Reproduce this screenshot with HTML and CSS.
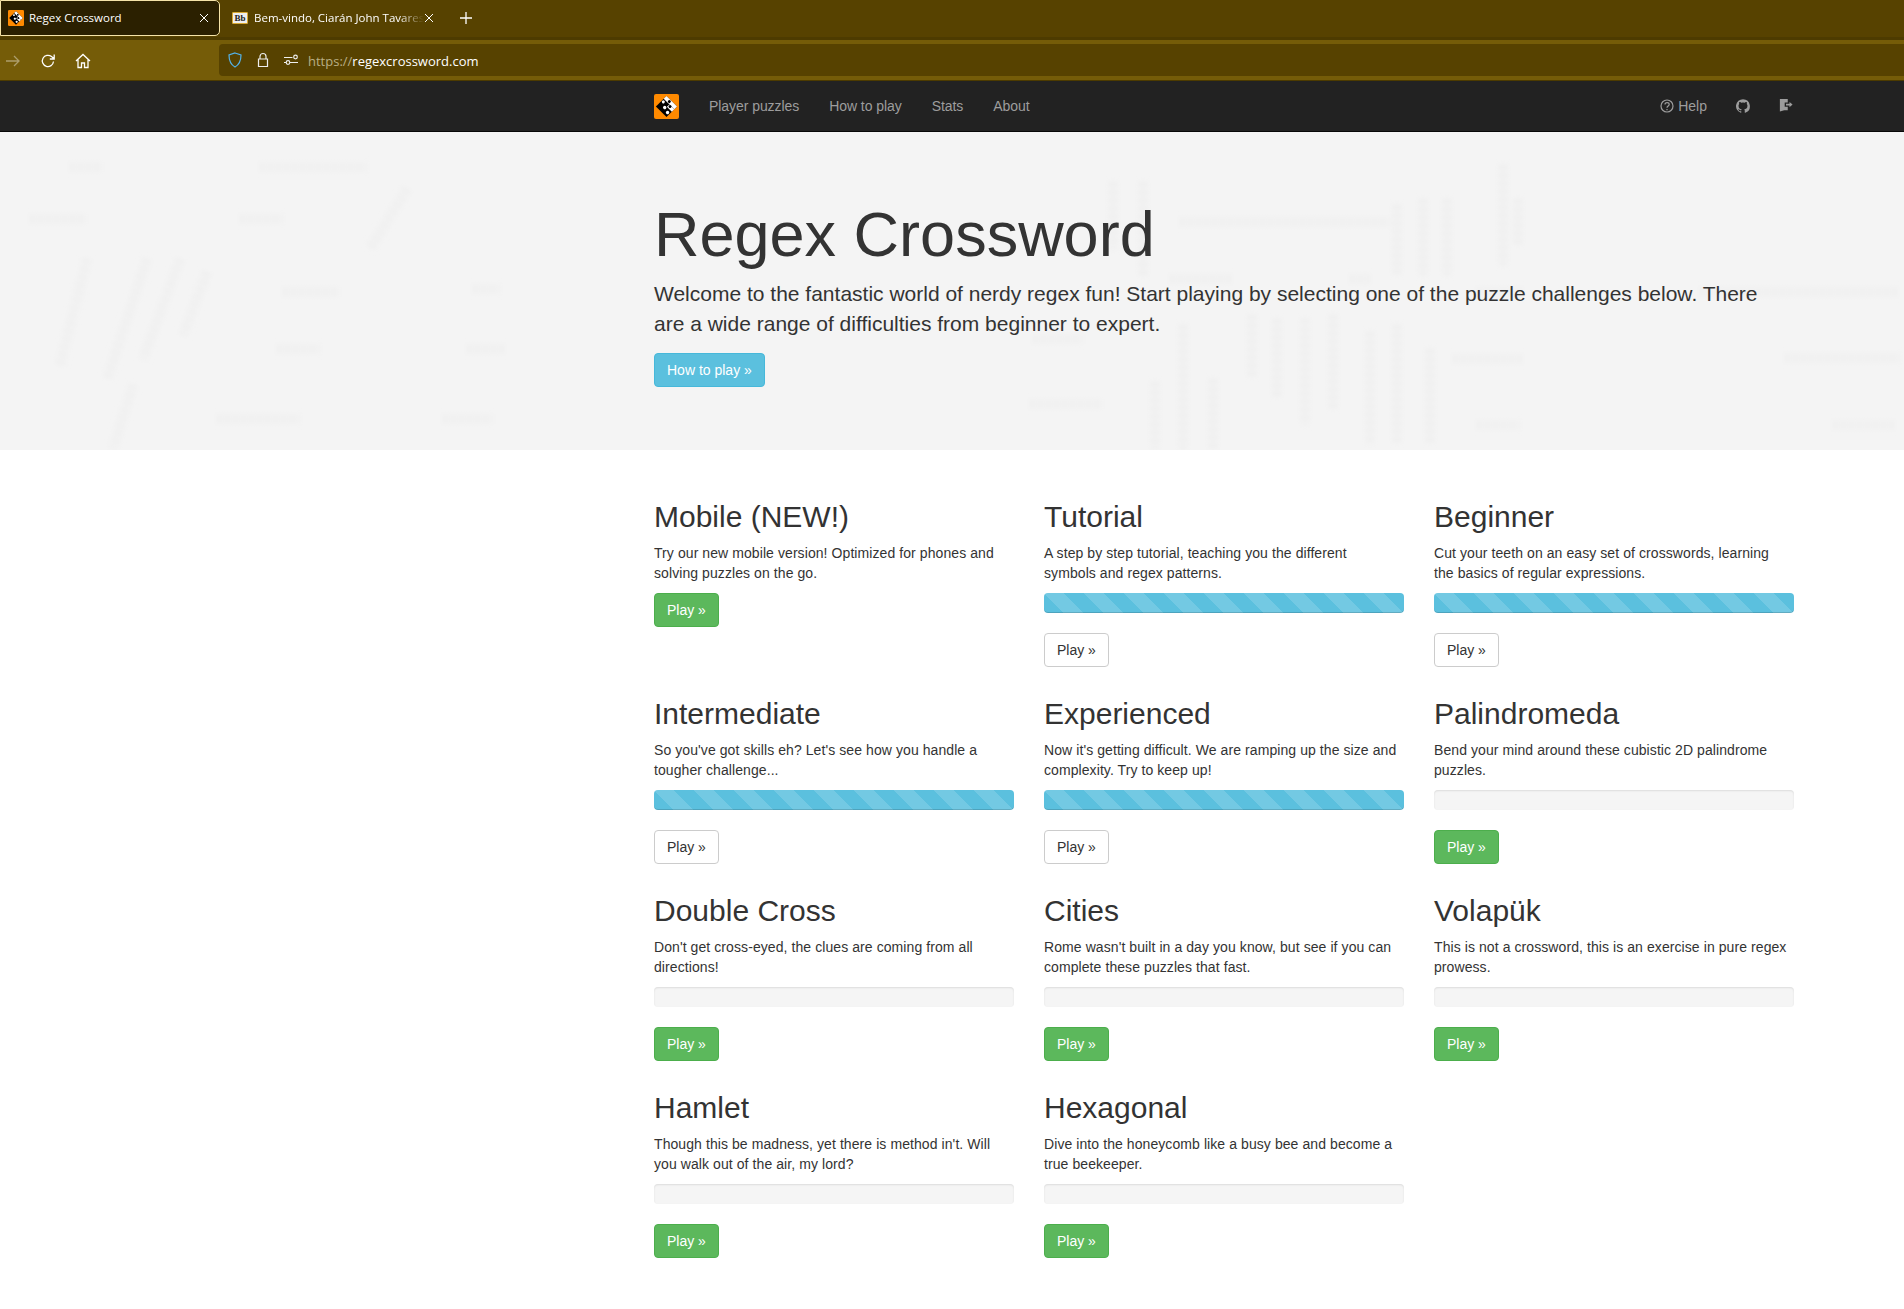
FILE: index.html
```html
<!DOCTYPE html>
<html>

<head>
  <meta charset="UTF-8" />
  <title>Regex Crossword</title>
  <link rel="stylesheet" href="styles.css">
</head>

<body>
  <!-- browser chrome -->
  <div class="tabstrip">
    <div class="tab tab-active">
      <svg class="favicon" viewBox="0 0 25 25">
        <rect width="25" height="25" rx="2" fill="#ff8a00" />
        <g transform="rotate(45 12.5 12.5)">
          <rect x="5" y="5" width="15" height="15" fill="#000" />
          <rect x="5" y="5" width="15" height="4" fill="#fff" />
          <rect x="13" y="9" width="7" height="3.500" fill="#fff" />
          <circle cx="7" cy="11.500" r="1.500" fill="#fff" />
          <circle cx="12" cy="14.500" r="1.700" fill="#fff" />
          <circle cx="17.500" cy="16" r="1.700" fill="#fff" />
          <circle cx="11" cy="7" r="1.500" fill="#000" />
          <circle cx="15" cy="10" r="1.500" fill="#000" />
        </g>
      </svg>
      <span class="tab-title">Regex Crossword</span>
      <svg class="tab-close" viewBox="0 0 10 10">
        <path d="M1 1 9 9M9 1 1 9" />
      </svg>
    </div>
    <div class="tab">
      <span class="bb-icon">Bb</span>
      <span class="tab-title tab-fade">Bem-vindo, Ciarán John Tavares</span>
      <svg class="tab-close" viewBox="0 0 10 10">
        <path d="M1 1 9 9M9 1 1 9" />
      </svg>
    </div>
    <svg class="new-tab" viewBox="0 0 12 12">
      <path d="M6 0V12M0 6H12" />
    </svg>
  </div>
  <div class="toolbar">
    <div class="toolbar-buttons">
      <svg class="tool tool-off" viewBox="0 0 16 16">
        <path d="M1 8H14M9 3l5 5-5 5" />
      </svg>
      <svg class="tool" viewBox="0 0 16 16">
        <path d="M13.500 8.500A5.600 5.600 0 1 1 11.500 3.600L14 5.800M14.200 1.500v4.500H9.800" />
      </svg>
      <svg class="tool" viewBox="0 0 16 16">
        <path d="M1 8 8 1.500 15 8M3 6.500V14.500H6.500V10H9.500V14.500H13V6.500" />
      </svg>
    </div>
    <div class="urlbar">
      <svg class="url-icon url-shield" viewBox="0 0 16 16">
        <path d="M8 1 14 3C14 9 12.500 12.500 8 15 3.500 12.500 2 9 2 3z" />
      </svg>
      <svg class="url-icon" viewBox="0 0 16 16">
        <path d="M5 7V4.500A3 3 0 0 1 11 4.500V7M3.500 7H12.500V14.500H3.500z" />
      </svg>
      <svg class="url-icon" viewBox="0 0 16 16">
        <path d="M1 5.500H9.500M1 10.500H3M7 10.500H15" />
        <circle cx="12.500" cy="5" r="1.800" />
        <circle cx="5" cy="10.500" r="1.800" />
      </svg>
      <span class="url-text"><span class="url-scheme">https://</span>regexcrossword.com</span>
    </div>
  </div>

  <!-- site nav -->
  <nav class="navbar">
    <div class="container nav-inner">
      <svg class="brand" viewBox="0 0 25 25">
        <rect width="25" height="25" rx="2" fill="#ff8a00" />
        <g transform="rotate(45 12.5 12.5)">
          <rect x="5" y="5" width="15" height="15" fill="#000" />
          <rect x="5" y="5" width="15" height="4" fill="#fff" />
          <rect x="13" y="9" width="7" height="3.500" fill="#fff" />
          <circle cx="7" cy="11.500" r="1.500" fill="#fff" />
          <circle cx="12" cy="14.500" r="1.700" fill="#fff" />
          <circle cx="17.500" cy="16" r="1.700" fill="#fff" />
          <circle cx="11" cy="7" r="1.500" fill="#000" />
          <circle cx="15" cy="10" r="1.500" fill="#000" />
        </g>
      </svg>
      <a class="nav-link" href="#">Player puzzles</a>
      <a class="nav-link" href="#">How to play</a>
      <a class="nav-link" href="#">Stats</a>
      <a class="nav-link" href="#">About</a>
      <div class="nav-right">
        <a class="nav-link nav-help" href="#">
          <svg class="help-icon" viewBox="0 0 14 14">
            <circle cx="7" cy="7" r="6" />
            <path d="M5 5.500C5 3 9.200 3 9.200 5.500 9.200 7 7 7 7 8.800M7 10v1.200" />
          </svg>
          Help
        </a>
        <svg class="nav-icon" viewBox="0 0 16 16">
          <path d="M8 .2a8 8 0 0 0-2.500 15.600c.4.100.5-.2.500-.4v-1.400c-2.200.5-2.700-1-2.700-1-.4-.9-.9-1.200-.9-1.200-.7-.5.100-.5.100-.5.800.1 1.200.8 1.200.8.700 1.200 1.900.9 2.300.7.100-.5.300-.9.500-1.100-1.800-.2-3.600-.9-3.600-4 0-.9.300-1.600.8-2.100-.1-.2-.4-1 .1-2.100 0 0 .7-.2 2.200.8a7.600 7.600 0 0 1 4 0c1.500-1 2.200-.8 2.200-.8.400 1.100.2 1.900.1 2.100.5.600.8 1.300.8 2.100 0 3.100-1.900 3.700-3.700 3.900.3.300.6.800.6 1.500v2.200c0 .2.100.5.600.4A8 8 0 0 0 8 .2z" />
        </svg>
        <svg class="nav-icon nav-logout" viewBox="0 0 16 16">
          <path d="M1 1H10V5H6.500V10H10V14H6L1 15.500z" />
          <path d="M8 6.500H12V4.500L15.500 7.500 12 10.500V8.500H8z" />
        </svg>
      </div>
    </div>
  </nav>

  <header class="hero">
    <svg class="hero-noise" viewBox="0 0 1904 318" preserveAspectRatio="none">
      <defs>
        <filter id="soft">
          <feGaussianBlur stdDeviation="2.600" />
        </filter>
      </defs>
      <g filter="url(#soft)" class="noise-lines">
        <path d="M70 35H103M260 35H367M30 87H87M240 87H283" />
        <path d="M87 127 60 233M147 127 107 247M180 127 143 227M207 140 183 203M133 253 113 317" />
        <path d="M283 160H340M277 217H320M217 287H300M443 287H493M467 217H507M473 157H500M407 57 370 117" />
        <path d="M1180 90H1390M1170 147H1233M1350 147H1370M1033 207H1083M1030 272H1103" />
        <path d="M1453 227H1523M1477 293H1520M1477 160H1523M1785 226H1900M1700 160H1900M1833 293H1895" />
        <path d="M1183 193V317M1213 247V317M1252 183V247M1277 187V267M1305 187V293M1333 183V277M1370 200V313M1397 193V313M1430 217V313M1155 250V317" />
        <path d="M1397 73V143M1423 67V143M1447 67V143M1503 33V133M1518 67V113M1113 50V117M1143 50V143" />
      </g>
    </svg>
    <div class="container hero-body">
      <h1>Regex Crossword</h1>
      <p class="lead">Welcome to the fantastic world of nerdy regex fun! Start playing by selecting one of the puzzle challenges below. There are a wide range of difficulties from beginner to expert.</p>
      <a class="btn btn-info" href="#">How to play »</a>
    </div>
  </header>

  <main class="container puzzles">
    <section class="puzzle">
      <h2>Mobile (NEW!)</h2>
      <p>Try our new mobile version! Optimized for phones and solving puzzles on the go.</p>
      <a class="btn btn-success" href="#">Play »</a>
    </section>
    <section class="puzzle">
      <h2>Tutorial</h2>
      <p>A step by step tutorial, teaching you the different symbols and regex patterns.</p>
      <div class="progress progress-done"></div>
      <a class="btn btn-default" href="#">Play »</a>
    </section>
    <section class="puzzle">
      <h2>Beginner</h2>
      <p>Cut your teeth on an easy set of crosswords, learning the basics of regular expressions.</p>
      <div class="progress progress-done"></div>
      <a class="btn btn-default" href="#">Play »</a>
    </section>
    <section class="puzzle">
      <h2>Intermediate</h2>
      <p>So you've got skills eh? Let's see how you handle a tougher challenge...</p>
      <div class="progress progress-done"></div>
      <a class="btn btn-default" href="#">Play »</a>
    </section>
    <section class="puzzle">
      <h2>Experienced</h2>
      <p>Now it's getting difficult. We are ramping up the size and complexity. Try to keep up!</p>
      <div class="progress progress-done"></div>
      <a class="btn btn-default" href="#">Play »</a>
    </section>
    <section class="puzzle">
      <h2>Palindromeda</h2>
      <p>Bend your mind around these cubistic 2D palindrome puzzles.</p>
      <div class="progress"></div>
      <a class="btn btn-success" href="#">Play »</a>
    </section>
    <section class="puzzle">
      <h2>Double Cross</h2>
      <p>Don't get cross-eyed, the clues are coming from all directions!</p>
      <div class="progress"></div>
      <a class="btn btn-success" href="#">Play »</a>
    </section>
    <section class="puzzle">
      <h2>Cities</h2>
      <p>Rome wasn't built in a day you know, but see if you can complete these puzzles that fast.</p>
      <div class="progress"></div>
      <a class="btn btn-success" href="#">Play »</a>
    </section>
    <section class="puzzle">
      <h2>Volapük</h2>
      <p>This is not a crossword, this is an exercise in pure regex prowess.</p>
      <div class="progress"></div>
      <a class="btn btn-success" href="#">Play »</a>
    </section>
    <section class="puzzle">
      <h2>Hamlet</h2>
      <p>Though this be madness, yet there is method in't. Will you walk out of the air, my lord?</p>
      <div class="progress"></div>
      <a class="btn btn-success" href="#">Play »</a>
    </section>
    <section class="puzzle">
      <h2>Hexagonal</h2>
      <p>Dive into the honeycomb like a busy bee and become a true beekeeper.</p>
      <div class="progress"></div>
      <a class="btn btn-success" href="#">Play »</a>
    </section>
  </main>
</body>

</html>
```

FILE: styles.css
```css
* {
  box-sizing: border-box;
}

body {
  margin: 0;
  font-family: "Liberation Sans", Arial, sans-serif;
  font-size: 14px;
  line-height: 20px;
  color: #333;
  background: #fff;
}

/* Browser chrome */
.tabstrip {
  display: flex;
  align-items: flex-start;
  height: 40px;
  background: #574200;
  box-shadow: inset 0 -3px 0 #4d3b00;
  font-family: "Open Sans", sans-serif;
  font-size: 11.500px;
  color: #fff;
}

.tab {
  display: flex;
  align-items: center;
  width: 220px;
  height: 36px;
  padding: 0 10px 0 7px;
}

.tab-active {
  background: #2b2000;
  border: 1px solid #f5e3a8;
  border-radius: 0 5px 5px 0;
  margin-right: 2px;
}

.favicon {
  width: 16px;
  height: 16px;
  margin-right: 5px;
  flex: none;
}

.tab-title {
  flex: 1;
  white-space: nowrap;
  overflow: hidden;
}

.tab-fade {
  -webkit-mask-image: linear-gradient(to right, #000 85%, transparent);
  mask-image: linear-gradient(to right, #000 85%, transparent);
}

.bb-icon {
  flex: none;
  width: 16px;
  height: 12px;
  margin: 0 6px 0 3px;
  background: #eee;
  border: 1px solid #d8a830;
  border-radius: 1px;
  color: #222;
  font: bold 9px/10px "Liberation Serif", serif;
  text-align: center;
}

.tab-close {
  width: 10px;
  height: 10px;
  margin-left: 4px;
  flex: none;
  fill: none;
  stroke: #fff;
  stroke-width: 1;
}

.tab + .tab .tab-close {
  margin-left: 0;
  margin-right: -2px;
}

.new-tab {
  width: 12px;
  height: 12px;
  margin-top: 12px;
  margin-left: 18px;
  fill: none;
  stroke: #fff;
  stroke-width: 1.300;
}

.toolbar {
  display: flex;
  align-items: center;
  height: 41px;
  background: #755c08;
  border-bottom: 1px solid #4d3b00;
}

.toolbar-buttons {
  display: flex;
  gap: 19px;
  align-items: center;
  width: 219px;
  padding-left: 5px;
  padding-top: 2px;
}

.tool {
  width: 16px;
  height: 16px;
  fill: none;
  stroke: #fff;
  stroke-width: 1.300;
}

.tool-off {
  opacity: 0.4;
}

.urlbar {
  flex: 1;
  display: flex;
  align-items: center;
  gap: 12px;
  height: 32px;
  padding-left: 8px;
  background: #574200;
  border-radius: 4px 0 0 4px;
  font-family: "Open Sans", sans-serif;
  font-size: 13px;
  color: #fff;
}

.url-icon {
  width: 16px;
  height: 16px;
  flex: none;
  fill: none;
  stroke: #eee;
  stroke-width: 1.200;
}

.url-shield {
  stroke: #54b3e8;
}

.url-text {
  margin-left: -3px;
  padding-top: 2px;
}

.url-scheme {
  color: #b9ae85;
}

/* Nav */
.container {
  width: 1170px;
  margin-left: 639px;
  padding: 0 15px;
}

.navbar {
  height: 51px;
  background: #222;
  border-bottom: 1px solid #080808;
}

.nav-inner {
  display: flex;
  align-items: center;
  height: 50px;
}

.brand {
  width: 25px;
  height: 25px;
  margin-right: 30px;
}

.nav-link {
  margin-right: 30px;
  color: #9d9d9d;
  letter-spacing: -0.060px;
  text-decoration: none;
}

.nav-right {
  display: flex;
  align-items: center;
  margin-left: auto;
  margin-right: -28px;
}

.nav-help {
  display: flex;
  align-items: center;
  gap: 4px;
  margin-right: 29px;
  letter-spacing: 0;
}

.help-icon {
  width: 14px;
  height: 14px;
  fill: none;
  stroke: #9d9d9d;
  stroke-width: 1.200;
}

.nav-icon {
  width: 14px;
  height: 14px;
  margin-right: 29px;
  fill: #9d9d9d;
}

.nav-logout {
  margin-top: -3px;
}

/* Hero */
.hero {
  position: relative;
  height: 318px;
  padding-top: 48px;
  background: #f4f4f4;
  overflow: hidden;
}

.hero-noise {
  position: absolute;
  top: 0;
  left: 0;
  width: 100%;
  height: 100%;
}

.noise-lines {
  fill: none;
  stroke: #efefef;
  stroke-width: 10;
  stroke-dasharray: 5 3;
}

.hero-body {
  position: relative;
}

.hero h1 {
  margin: 20px 0 10px;
  font-size: 63px;
  font-weight: 500;
  line-height: 69px;
}

.lead {
  max-width: 1110px;
  margin: 0 0 14px;
  font-size: 21px;
  line-height: 30px;
}

.btn {
  display: inline-block;
  padding: 6px 12px;
  border: 1px solid transparent;
  border-radius: 4px;
  font-size: 14px;
  line-height: 20px;
  text-decoration: none;
}

.btn-info {
  background: #5bc0de;
  border-color: #46b8da;
  color: #fff;
}

.btn-success {
  background: #5cb85c;
  border-color: #4cae4c;
  color: #fff;
}

.btn-default {
  background: #fff;
  border-color: #ccc;
  color: #333;
}

/* Puzzle grid */
.puzzles {
  display: grid;
  grid-template-columns: repeat(3, 360px);
  grid-auto-rows: 197px;
  column-gap: 30px;
  padding-top: 30px;
}

.puzzle h2 {
  margin: 20px 0 10px;
  font-size: 30px;
  font-weight: 500;
  line-height: 33px;
}

.puzzle p {
  max-width: 356px;
  margin: 0 0 10px;
  letter-spacing: 0.080px;
}

.progress {
  height: 20px;
  margin-bottom: 20px;
  background: #f5f5f5;
  border-radius: 4px;
  box-shadow: inset 0 1px 2px rgba(0, 0, 0, 0.1);
}

.progress-done {
  background-color: #5bc0de;
  background-image: linear-gradient(45deg, rgba(255, 255, 255, 0.15) 25%, transparent 25%, transparent 50%, rgba(255, 255, 255, 0.15) 50%, rgba(255, 255, 255, 0.15) 75%, transparent 75%, transparent);
  background-size: 40px 40px;
  box-shadow: inset 0 -1px 0 rgba(0, 0, 0, 0.15);
}
```
